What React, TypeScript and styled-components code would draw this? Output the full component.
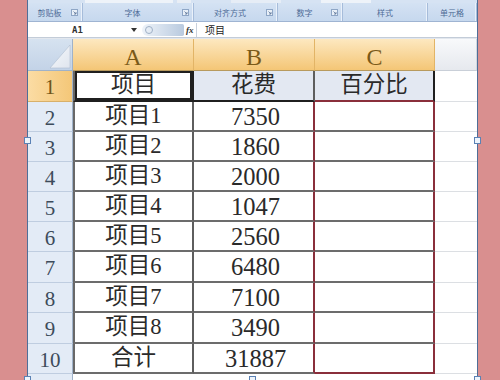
import React from "react";
import styled, { createGlobalStyle } from "styled-components";

const Global = createGlobalStyle`
  html, body { margin: 0; padding: 0; }
  body { width: 500px; height: 380px; overflow: hidden; background: #d98f8f; }
  #root { width: 500px; height: 380px; }
`;

const Page = styled.div`
  position: relative;
  display: flex;
  width: 500px;
  height: 380px;
  background: #d98f8f;
  overflow: hidden;
`;

const Margin = styled.div<{ $w: number }>`
  flex: 0 0 ${(p) => p.$w}px;
`;

const Frame = styled.div`
  flex: 0 0 449px;
  border-left: 1px solid #4f6e98;
  border-right: 1px solid #4f6e98;
  display: flex;
  flex-direction: column;
  background: #fff;
  overflow: hidden;
`;

/* ---------- ribbon ---------- */
const Ribbon = styled.div`
  flex: 0 0 22px;
  box-sizing: border-box;
  display: flex;
  flex-direction: column;
  background: #dbe6f4;
  border-bottom: 1px solid #9fb4d2;
`;

const RibbonTop = styled.div`
  flex: 0 0 3px;
  display: flex;
  background: #d6e3f3;
`;

const TopBit = styled.span<{ $w: number; $ml: number; $c: string }>`
  flex: 0 0 ${(p) => p.$w}px;
  margin-left: ${(p) => p.$ml}px;
  background: ${(p) => p.$c};
`;

const GroupRow = styled.div`
  flex: 1;
  display: flex;
  background: linear-gradient(#d4e2f3, #c6d8ee);
`;

const Group = styled.div<{ $w: number }>`
  flex: 0 0 ${(p) => p.$w}px;
  box-sizing: border-box;
  display: grid;
  grid-template-columns: 1fr auto;
  align-items: center;
  border-right: 1px solid #a6bcda;
  box-shadow: inset -1px 0 0 #eaf1fa;
  font: 8px "Noto Sans CJK SC", sans-serif;
  color: #4d6b96;
`;

const GroupLabel = styled.span`
  text-align: center;
  white-space: nowrap;
`;

const Launcher = styled.svg`
  width: 7px;
  height: 7px;
  margin-right: 4px;
`;

/* ---------- formula bar ---------- */
const FormulaBar = styled.div`
  flex: 0 0 15px;
  box-sizing: border-box;
  display: flex;
  align-items: center;
  background: #fff;
  border-bottom: 1px solid #c3ccd8;
`;

const NameBox = styled.div`
  flex: 0 0 114px;
  display: flex;
  align-items: center;
  font: bold 9px "DejaVu Sans Mono", monospace;
  color: #333;
`;

const NameText = styled.span`
  margin-left: 44px;
`;

const DropArrow = styled.svg`
  width: 6px;
  height: 4px;
  margin-left: auto;
  margin-right: 5px;
`;

const FxArea = styled.div`
  flex: 0 0 55px;
  height: 14px;
  box-sizing: border-box;
  display: flex;
  align-items: center;
  border-right: 1px solid #c8d0dc;
`;

const FxPill = styled.div`
  flex: 0 0 42px;
  height: 12px;
  border-radius: 7px 2px 2px 7px;
  background: linear-gradient(90deg, #eef3f9, #b9cadf);
  display: flex;
  align-items: center;
`;

const FxCircle = styled.span`
  width: 8px;
  height: 8px;
  margin-left: 3px;
  border-radius: 50%;
  border: 1px solid #9fb0c6;
  box-sizing: border-box;
`;

const FxLabel = styled.span`
  margin-left: 2px;
  font: italic bold 9px "Liberation Serif", serif;
  color: #333;
`;

const FormulaText = styled.span`
  margin-left: 8px;
  font: 10px "Noto Sans CJK SC", sans-serif;
  color: #222;
`;

const Band = styled.div`
  flex: 0 0 1px;
  background: #e2e7ee;
`;

/* ---------- sheet ---------- */
const Sheet = styled.table`
  border-collapse: separate;
  border-spacing: 0;
  table-layout: fixed;
  width: 449px;
`;

const Corner = styled.th`
  height: 32px;
  padding: 0;
  box-sizing: border-box;
  background: linear-gradient(#d6e2f0, #c3d3e7);
  border-right: 1px solid #9fb2c9;
  border-bottom: 1px solid #9fb2c9;
  vertical-align: bottom;
  text-align: right;
`;

const CornerTri = styled.svg`
  display: block;
  width: 44px;
  height: 31px;
`;

const ColHead = styled.th<{ $sel?: boolean }>`
  height: 32px;
  padding: 4px 0 0;
  box-sizing: border-box;
  background: ${(p) =>
    p.$sel ? "linear-gradient(#fde8c0, #f4c676)" : "linear-gradient(#f8f9fb, #e6e9ee)"};
  border-right: 1px solid ${(p) => (p.$sel ? "#e2b466" : "#d3d8df")};
  border-bottom: 1px solid ${(p) => (p.$sel ? "#b89a5e" : "#c9cfd8")};
  font: 400 24px "Liberation Serif", serif;
  line-height: 1;
  color: #7a5a18;
  text-align: center;
  vertical-align: middle;
`;

const Row = styled.tr<{ $h: number }>`
  height: ${(p) => p.$h}px;
`;

const RowHead = styled.th<{ $sel?: boolean }>`
  padding: 3px 0 0;
  box-sizing: border-box;
  background: ${(p) => (p.$sel ? "linear-gradient(90deg, #fbdca4, #f4c778)" : "#e3ebf6")};
  border-right: 1px solid #9fb2c9;
  border-bottom: 1px solid ${(p) => (p.$sel ? "#d8b06a" : "#bfcde0")};
  font: 400 21px "Liberation Serif", serif;
  line-height: 1;
  color: ${(p) => (p.$sel ? "#6e5418" : "#3d4b5b")};
  text-align: center;
  vertical-align: middle;
`;

type CellProps = {
  $first?: boolean;
  $num?: boolean;
  $bg?: string;
  $active?: boolean;
  $right?: string;
  $bottom?: string;
};

const Cell = styled.td<CellProps>`
  padding: ${(p) => (p.$num ? "2px 0 0 4px" : "0")};
  box-sizing: border-box;
  background: ${(p) => p.$bg || "#fff"};
  border-left: ${(p) => (p.$first ? "2px solid #686868" : "0")};
  border-right: 2px solid ${(p) => p.$right || "#5e5e5e"};
  border-bottom: 2px solid ${(p) => p.$bottom || "#6c6c6c"};
  box-shadow: ${(p) => (p.$active ? "inset 0 0 0 2px #1f1f1f" : "none")};
  font: 400 ${(p) => (p.$num ? "24.5px" : "22.5px")} "Liberation Serif", "Noto Sans CJK SC", serif;
  line-height: 1;
  color: #2a2a2a;
  text-align: center;
  vertical-align: middle;
  white-space: nowrap;
`;

const EmptyCell = styled.td`
  padding: 0;
  box-sizing: border-box;
  background: #fff;
  border-bottom: 1px solid #dcdfe3;
`;

const Handle = styled.span<{ $x: number; $y: number }>`
  position: absolute;
  left: ${(p) => p.$x}px;
  top: ${(p) => p.$y}px;
  width: 7px;
  height: 7px;
  box-sizing: border-box;
  border: 1px solid #5b82b5;
  background: #eef4fb;
`;

const groups = [
  { label: "剪贴板", w: 55, launcher: true },
  { label: "字体", w: 111, launcher: true },
  { label: "对齐方式", w: 84, launcher: true },
  { label: "数字", w: 65, launcher: true },
  { label: "样式", w: 85, launcher: false },
  { label: "单元格", w: 49, launcher: false },
];

const data: [string, string, string][] = [
  ["项目", "花费", "百分比"],
  ["项目1", "7350", ""],
  ["项目2", "1860", ""],
  ["项目3", "2000", ""],
  ["项目4", "1047", ""],
  ["项目5", "2560", ""],
  ["项目6", "6480", ""],
  ["项目7", "7100", ""],
  ["项目8", "3490", ""],
  ["合计", "31887", ""],
];

const heights = [31, 30, 30, 30, 30, 30, 31, 30, 31, 30];

const RED = "#8a2f3b";
const BLACK = "#1f1f1f";

export default function App() {
  return (
    <Page>
      <Global />
      <Margin $w={27} />
      <Frame>
        <Ribbon>
          <RibbonTop>
            <TopBit $w={88} $ml={57} $c="#eef3f9" />
            <TopBit $w={14} $ml={4} $c="#e9eef5" />
            <TopBit $w={50} $ml={40} $c="#e6edf6" />
            <TopBit $w={50} $ml={40} $c="#eef3f9" />
          </RibbonTop>
          <GroupRow>
            {groups.map((g) => (
              <Group key={g.label} $w={g.w}>
                <GroupLabel>{g.label}</GroupLabel>
                {g.launcher ? (
                  <Launcher viewBox="0 0 7 7">
                    <rect x="0.5" y="0.5" width="6" height="6" fill="#e9f0f8" stroke="#8ea6c6" />
                    <path d="M2.5 2.5 L5 5 M5 3 V5 H3" stroke="#5a7398" fill="none" strokeWidth="0.8" />
                  </Launcher>
                ) : null}
              </Group>
            ))}
          </GroupRow>
        </Ribbon>
        <FormulaBar>
          <NameBox>
            <NameText>A1</NameText>
            <DropArrow viewBox="0 0 6 4">
              <path d="M0 0 H6 L3 4 Z" fill="#333" />
            </DropArrow>
          </NameBox>
          <FxArea>
            <FxPill>
              <FxCircle />
            </FxPill>
            <FxLabel>fx</FxLabel>
          </FxArea>
          <FormulaText>项目</FormulaText>
        </FormulaBar>
        <Band />
        <Sheet>
          <colgroup>
            <col style={{ width: 45 }} />
            <col style={{ width: 121 }} />
            <col style={{ width: 121 }} />
            <col style={{ width: 120 }} />
            <col style={{ width: 42 }} />
          </colgroup>
          <thead>
            <tr>
              <Corner>
                <CornerTri viewBox="0 0 44 31">
                  <defs>
                    <linearGradient id="tri" x1="0" y1="0" x2="1" y2="1">
                      <stop offset="0" stopColor="#f7f9fc" />
                      <stop offset="1" stopColor="#dfe5ee" />
                    </linearGradient>
                  </defs>
                  <polygon points="22,29 42,29 42,6" fill="url(#tri)" stroke="#aebdd0" strokeWidth="0.6" />
                </CornerTri>
              </Corner>
              <ColHead $sel>A</ColHead>
              <ColHead $sel>B</ColHead>
              <ColHead $sel>C</ColHead>
              <ColHead />
            </tr>
          </thead>
          <tbody>
            {data.map(([a, b, c], i) => {
              const first = i === 0;
              const inRed = i >= 1;
              const last = i === data.length - 1;
              return (
                <Row key={i} $h={heights[i]}>
                  <RowHead $sel={first}>{i + 1}</RowHead>
                  <Cell
                    $first
                    $active={first}
                    $right={first ? BLACK : undefined}
                    $bottom={first ? BLACK : undefined}
                  >
                    {a}
                  </Cell>
                  <Cell
                    $num={!first}
                    $bg={first ? "#e3e8f2" : undefined}
                    $right={inRed ? RED : undefined}
                    $bottom={first ? BLACK : undefined}
                  >
                    {b}
                  </Cell>
                  <Cell
                    $bg={first ? "#e3e8f2" : undefined}
                    $right={first ? BLACK : RED}
                    $bottom={first || last ? RED : undefined}
                  >
                    {c}
                  </Cell>
                  <EmptyCell />
                </Row>
              );
            })}
            <Row $h={20}>
              <RowHead />
              <EmptyCell />
              <EmptyCell />
              <EmptyCell />
              <EmptyCell />
            </Row>
          </tbody>
        </Sheet>
      </Frame>
      <Margin $w={22} />
      <Handle $x={24} $y={137} />
      <Handle $x={474} $y={137} />
      <Handle $x={24} $y={376} />
      <Handle $x={249} $y={376} />
      <Handle $x={474} $y={376} />
    </Page>
  );
}
